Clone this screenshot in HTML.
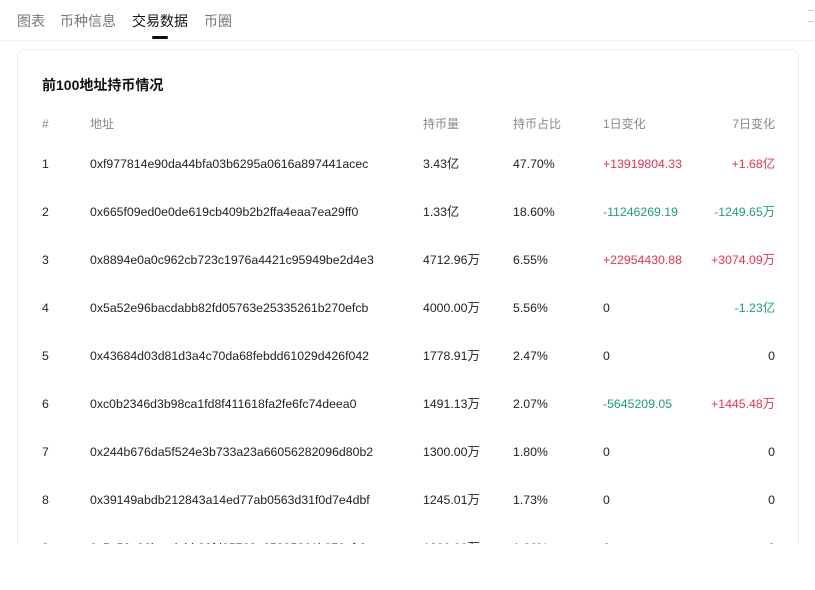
<!DOCTYPE html><html><head><meta charset="utf-8"><style>
body{margin:0;width:815px;height:590px;background:#fff;font-family:"Liberation Sans","Noto Sans CJK SC",sans-serif;position:relative;overflow:hidden}
.tabs{position:absolute;top:0;left:0;right:0;height:40px;border-bottom:1px solid #eee}
.tab{position:absolute;top:11px;font-size:14px;color:#777}
.act{color:#111}
.ul{position:absolute;left:152px;top:36px;width:16px;height:3px;background:#111;border-radius:2px}
.card{position:absolute;left:17px;top:49px;width:780px;height:494px;border:1px solid #eee;border-bottom:none;border-radius:8px 8px 0 0;overflow:hidden}
.title{position:absolute;left:24px;top:25px;font-size:14px;font-weight:bold;color:#111}
.r{position:absolute;left:0;width:780px;height:20px;font-size:12.3px;color:#222;line-height:20px}
.r span{position:absolute;top:0;white-space:nowrap;line-height:20px;height:20px}
.h{color:#888;font-size:12px}
.g{color:#1aa36b}.red{color:#e8334f}
</style></head><body>
<div class="tabs">
<div class="tab" style="left:17px">图表</div>
<div class="tab" style="left:60px">币种信息</div>
<div class="tab act" style="left:132px">交易数据</div>
<div class="tab" style="left:204px">币圈</div>
<div class="ul"></div>
</div>
<div style="position:absolute;left:808px;top:10px;width:6px;height:10px;border-top:1px solid #ccc;border-bottom:1px solid #ccc"></div>
<div class="card">
<div class="title">前100地址持币情况</div>
<div class="r h" style="top:64px"><span style="left:24px">#</span><span style="left:72px">地址</span><span style="left:405px">持币量</span><span style="left:495px">持币占比</span><span style="left:585px">1日变化</span><span style="right:23px">7日变化</span></div>
<div class="r" style="top:104px"><span style="left:24px">1</span><span style="left:72px">0xf977814e90da44bfa03b6295a0616a897441acec</span><span style="left:405px">3.43亿</span><span style="left:495px">47.70%</span><span class="red" style="left:585px">+13919804.33</span><span class="red" style="right:23px">+1.68亿</span></div>
<div class="r" style="top:152px"><span style="left:24px">2</span><span style="left:72px">0x665f09ed0e0de619cb409b2b2ffa4eaa7ea29ff0</span><span style="left:405px">1.33亿</span><span style="left:495px">18.60%</span><span class="g" style="left:585px">-11246269.19</span><span class="g" style="right:23px">-1249.65万</span></div>
<div class="r" style="top:200px"><span style="left:24px">3</span><span style="left:72px">0x8894e0a0c962cb723c1976a4421c95949be2d4e3</span><span style="left:405px">4712.96万</span><span style="left:495px">6.55%</span><span class="red" style="left:585px">+22954430.88</span><span class="red" style="right:23px">+3074.09万</span></div>
<div class="r" style="top:248px"><span style="left:24px">4</span><span style="left:72px">0x5a52e96bacdabb82fd05763e25335261b270efcb</span><span style="left:405px">4000.00万</span><span style="left:495px">5.56%</span><span style="left:585px">0</span><span class="g" style="right:23px">-1.23亿</span></div>
<div class="r" style="top:296px"><span style="left:24px">5</span><span style="left:72px">0x43684d03d81d3a4c70da68febdd61029d426f042</span><span style="left:405px">1778.91万</span><span style="left:495px">2.47%</span><span style="left:585px">0</span><span style="right:23px">0</span></div>
<div class="r" style="top:344px"><span style="left:24px">6</span><span style="left:72px">0xc0b2346d3b98ca1fd8f411618fa2fe6fc74deea0</span><span style="left:405px">1491.13万</span><span style="left:495px">2.07%</span><span class="g" style="left:585px">-5645209.05</span><span class="red" style="right:23px">+1445.48万</span></div>
<div class="r" style="top:392px"><span style="left:24px">7</span><span style="left:72px">0x244b676da5f524e3b733a23a66056282096d80b2</span><span style="left:405px">1300.00万</span><span style="left:495px">1.80%</span><span style="left:585px">0</span><span style="right:23px">0</span></div>
<div class="r" style="top:440px"><span style="left:24px">8</span><span style="left:72px">0x39149abdb212843a14ed77ab0563d31f0d7e4dbf</span><span style="left:405px">1245.01万</span><span style="left:495px">1.73%</span><span style="left:585px">0</span><span style="right:23px">0</span></div>
<div class="r" style="top:488px"><span style="left:24px">9</span><span style="left:72px">0x5a52e96bacdabb82fd05763e25335261b270efcb</span><span style="left:405px">1200.00万</span><span style="left:495px">1.66%</span><span style="left:585px">0</span><span style="right:23px">0</span></div>
</div>
</body></html>
